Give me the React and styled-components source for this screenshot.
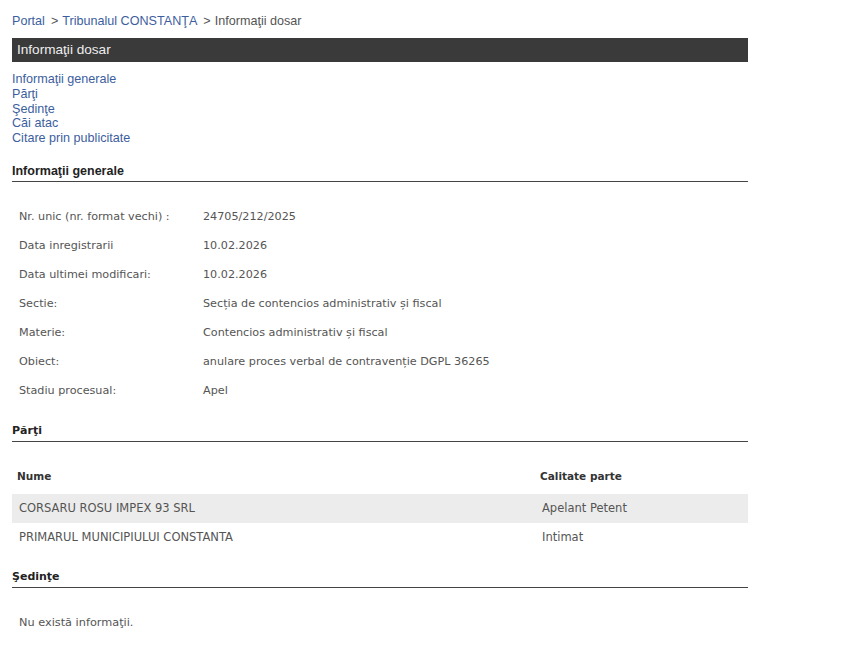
import React from 'react'
import styled, { createGlobalStyle } from 'styled-components'

const GlobalStyle = createGlobalStyle`
  body {
    margin: 0;
    background: #fff;
    font-family: "Liberation Sans", Arial, sans-serif;
  }
`

const Page = styled.div`
  width: 736px;
  margin-left: 12px;
  padding-top: 14px;
  padding-bottom: 20px;
`

const Breadcrumb = styled.div`
  font-size: 12.6px;
  line-height: 14px;
  color: #555;
  a {
    color: #3d5e9e;
    text-decoration: none;
  }
  span.sep {
    margin: 0 4px 0 6px;
  }
`

const TitleBar = styled.div`
  margin-top: 10px;
  height: 24px;
  line-height: 24px;
  background: #3a3a3a;
  color: #eee;
  font-size: 13.6px;
  padding-left: 5px;
`

const LinkList = styled.ul`
  list-style: none;
  margin: 10px 0 0;
  padding: 0;
  li {
    font-size: 12.6px;
    line-height: 14.75px;
  }
  a {
    color: #3d5e9e;
    text-decoration: none;
  }
`

const SectionTitle = styled.h3`
  margin: ${p => p.$top || 18}px 0 0;
  padding-bottom: 3px;
  border-bottom: 1px solid #444;
  line-height: 14px;
  font-weight: bold;
  color: #222;
  font-family: ${p => p.$alt ? '"DejaVu Sans", Verdana, sans-serif' : '"Liberation Sans", Arial, sans-serif'};
  font-size: ${p => p.$alt ? '11px' : '12.5px'};
`

const InfoTable = styled.table`
  margin-top: 20px;
  border-collapse: collapse;
  width: 100%;
  font-family: "DejaVu Sans", Verdana, sans-serif;
  font-size: 11.2px;
  color: #555;
  td {
    height: 29px;
    padding: 0 0 0 7px;
    vertical-align: middle;
  }
  td:first-child {
    width: 177px;
  }
`

const PartyTable = styled.table`
  margin-top: 19px;
  border-collapse: collapse;
  width: 100%;
  font-family: "DejaVu Sans", Verdana, sans-serif;
  font-size: 11.5px;
  color: #555;
  th {
    height: 31px;
    text-align: left;
    font-weight: bold;
    font-size: 10.5px;
    color: #333;
    padding: 0 0 2px 5px;
  }
  td {
    height: 29px;
    padding: 0 0 0 7px;
  }
  th:first-child, td:first-child {
    width: 516px;
  }
`

const PartyRow = styled.tr`
  background: ${p => p.$shaded ? '#ececec' : 'transparent'};
`

const EmptyNote = styled.p`
  margin: 28px 0 0 7px;
  font-family: "DejaVu Sans", Verdana, sans-serif;
  font-size: 11.3px;
  line-height: 14px;
  color: #555;
`

const info = [
  ['Nr. unic (nr. format vechi) :', '24705/212/2025'],
  ['Data inregistrarii', '10.02.2026'],
  ['Data ultimei modificari:', '10.02.2026'],
  ['Sectie:', 'Secția de contencios administrativ și fiscal'],
  ['Materie:', 'Contencios administrativ și fiscal'],
  ['Obiect:', 'anulare proces verbal de contravenție DGPL 36265'],
  ['Stadiu procesual:', 'Apel'],
]

const parties = [
  ['CORSARU ROSU IMPEX 93 SRL', 'Apelant Petent'],
  ['PRIMARUL MUNICIPIULUI CONSTANTA', 'Intimat'],
]

export default function App() {
  return (
    <>
      <GlobalStyle />
      <Page>
        <Breadcrumb>
          <a href="#">Portal</a>
          <span className="sep">&gt;</span>
          <a href="#">Tribunalul CONSTANŢA</a>
          <span className="sep">&gt;</span>
          Informaţii dosar
        </Breadcrumb>
        <TitleBar>Informaţii dosar</TitleBar>
        <LinkList>
          <li><a href="#">Informaţii generale</a></li>
          <li><a href="#">Părţi</a></li>
          <li><a href="#">Şedinţe</a></li>
          <li><a href="#">Căi atac</a></li>
          <li><a href="#">Citare prin publicitate</a></li>
        </LinkList>

        <SectionTitle $top={18}>Informaţii generale</SectionTitle>
        <InfoTable>
          <tbody>
            {info.map(([k, v]) => (
              <tr key={k}>
                <td>{k}</td>
                <td>{v}</td>
              </tr>
            ))}
          </tbody>
        </InfoTable>

        <SectionTitle $alt $top={19}>Părţi</SectionTitle>
        <PartyTable>
          <thead>
            <tr>
              <th>Nume</th>
              <th>Calitate parte</th>
            </tr>
          </thead>
          <tbody>
            {parties.map(([n, c], i) => (
              <PartyRow key={n} $shaded={i % 2 === 0}>
                <td>{n}</td>
                <td>{c}</td>
              </PartyRow>
            ))}
          </tbody>
        </PartyTable>

        <SectionTitle $alt $top={18}>Şedinţe</SectionTitle>
        <EmptyNote>Nu există informaţii.</EmptyNote>
      </Page>
    </>
  )
}
